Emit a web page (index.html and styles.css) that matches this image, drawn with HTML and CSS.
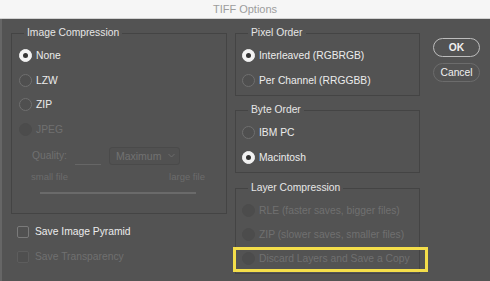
FILE: index.html
```html
<!DOCTYPE html>
<html>
<head>
<meta charset="utf-8">
<link rel="stylesheet" href="styles.css">
</head>
<body>
<div class="window">
  <div class="titlebar">TIFF Options</div>
  <div class="main">
    <div class="col-left">
      <fieldset class="group">
        <legend>Image Compression</legend>
        <div class="row"><span class="radio on"></span><span class="lbl">None</span></div>
        <div class="row"><span class="radio"></span><span class="lbl">LZW</span></div>
        <div class="row"><span class="radio"></span><span class="lbl">ZIP</span></div>
        <div class="row dis"><span class="radio"></span><span class="lbl">JPEG</span></div>
        <div class="quality">
          <span class="qlabel">Quality:</span>
          <span class="qinput"></span>
          <span class="select">Maximum<svg class="chev" width="7" height="5" viewBox="0 0 7 5"><path d="M0.5 1 L3.5 4 L6.5 1" fill="none" stroke="#6c6c6c" stroke-width="1"/></svg></span>
        </div>
        <div class="scale"><span>small file</span><span>large file</span></div>
        <div class="slider"></div>
      </fieldset>
      <div class="check-row"><span class="check"></span><span class="lbl">Save Image Pyramid</span></div>
      <div class="check-row dis"><span class="check"></span><span class="lbl">Save Transparency</span></div>
    </div>
    <div class="col-right">
      <fieldset class="group rgroup">
        <legend>Pixel Order</legend>
        <div class="row"><span class="radio on"></span><span class="lbl">Interleaved (RGBRGB)</span></div>
        <div class="row"><span class="radio"></span><span class="lbl">Per Channel (RRGGBB)</span></div>
      </fieldset>
      <fieldset class="group rgroup next">
        <legend>Byte Order</legend>
        <div class="row"><span class="radio"></span><span class="lbl">IBM PC</span></div>
        <div class="row"><span class="radio on"></span><span class="lbl">Macintosh</span></div>
      </fieldset>
      <fieldset class="group rgroup next layers">
        <legend>Layer Compression</legend>
        <div class="row dis"><span class="radio"></span><span class="lbl">RLE (faster saves, bigger files)</span></div>
        <div class="row dis"><span class="radio"></span><span class="lbl">ZIP (slower saves, smaller files)</span></div>
        <div class="row dis marked"><span class="radio"></span><span class="lbl">Discard Layers and Save a Copy</span><span class="highlight"></span></div>
      </fieldset>
    </div>
    <div class="col-buttons">
      <button class="btn primary">OK</button>
      <button class="btn">Cancel</button>
    </div>
  </div>
</div>
</body>
</html>
```

FILE: styles.css
```css
html, body {
  margin: 0;
  padding: 0;
}
body {
  width: 490px;
  height: 281px;
  overflow: hidden;
  background: #535353;
  font-family: "Liberation Sans", Arial, sans-serif;
  font-size: 10.3px;
  color: #ececec;
}
.window {
  width: 490px;
  height: 281px;
}
.titlebar {
  height: 18px;
  line-height: 18px;
  background: #f6f6f6;
  border-bottom: 1px solid #d2d2d2;
  text-align: center;
  font-size: 11px;
  color: #9d9d9d;
}
.main {
  display: flex;
  align-items: flex-start;
  height: 262px;
  box-sizing: border-box;
  border-left: 2px solid #666666;
  padding: 7px 0 0 9px;
}
.col-left {
  width: 216px;
  display: flex;
  flex-direction: column;
}
.col-right {
  width: 185px;
  margin-left: 8px;
  display: flex;
  flex-direction: column;
}
.col-buttons {
  width: 47px;
  margin-left: 13px;
  padding-top: 12px;
  display: flex;
  flex-direction: column;
  gap: 6px;
}
.group {
  margin: 0;
  min-width: 0;
  border: 1px solid #444444;
  padding: 3px 0 19px 7px;
}
.group legend {
  padding: 0 3px;
  margin-left: 5px;
  line-height: 14px;
  height: 14px;
  color: #e6e6e6;
}
.rgroup {
  padding: 3px 0 2px 6px;
}
.rgroup legend {
  margin-left: 6px;
}
.rgroup.next {
  margin-top: 7px;
}
.rgroup.layers {
  margin-top: 8px;
  padding-bottom: 3px;
}
.row {
  height: 24.7px;
  display: flex;
  align-items: center;
  gap: 4px;
  position: relative;
}
.rgroup .row {
  height: 25px;
}
.rgroup.layers .row {
  height: 24px;
}
.radio {
  width: 13px;
  height: 13px;
  box-sizing: border-box;
  border-radius: 50%;
  border: 1px solid #6f6f6f;
  background: #4f4f4f;
  flex: none;
  display: flex;
  align-items: center;
  justify-content: center;
}
.radio.on {
  background: #f2f2f2;
  border-color: #f2f2f2;
}
.radio.on::after {
  content: "";
  width: 5px;
  height: 5px;
  border-radius: 50%;
  background: #333333;
}
.row.dis .radio {
  border-color: #4c4c4c;
  background: #4c4c4c;
}
.row.dis .lbl,
.check-row.dis .lbl {
  color: #707070;
}
.quality {
  display: flex;
  align-items: center;
  height: 18px;
  margin: 5px 0 0 13px;
  color: #707070;
}
.qinput {
  width: 26px;
  height: 18px;
  box-sizing: border-box;
  border-bottom: 1px solid #666666;
  margin-left: 8px;
}
.select {
  width: 71px;
  height: 18px;
  box-sizing: border-box;
  margin-left: 8px;
  border: 1px solid #4a4a4a;
  border-radius: 3px;
  background: #515151;
  display: flex;
  align-items: center;
  justify-content: space-between;
  padding: 0 4px 0 6px;
  color: #727272;
  font-size: 10.5px;
}
.scale {
  display: flex;
  justify-content: space-between;
  width: 174px;
  margin: 6px 0 0 12px;
  line-height: 12px;
  font-size: 9.5px;
  color: #6c6c6c;
}
.slider {
  width: 156px;
  height: 2px;
  margin: 9px 0 0 21px;
  background: #6a6a6a;
}
.check-row {
  height: 24px;
  display: flex;
  align-items: center;
  gap: 6px;
  padding-left: 6px;
}
.check-row:first-of-type {
  margin-top: 6px;
}
.check-row:first-of-type + .check-row {
  margin-top: 1px;
}
.check {
  width: 12px;
  height: 12px;
  box-sizing: border-box;
  border: 1px solid #7a7a7a;
  border-radius: 2px;
  background: #515151;
  flex: none;
}
.check-row.dis .check {
  border-color: #5d5d5d;
  background: #4f4f4f;
}
.highlight {
  position: absolute;
  left: -9px;
  top: 1px;
  width: 195px;
  height: 25px;
  border: 3px solid #f4de4a;
  box-sizing: border-box;
  pointer-events: none;
}
.btn {
  width: 47px;
  height: 19px;
  box-sizing: border-box;
  border-radius: 10px;
  border: 1px solid #6c6c6c;
  background: #535353;
  color: #f0f0f0;
  font-family: "Liberation Sans", Arial, sans-serif;
  font-size: 10.3px;
  padding: 0;
  margin: 0;
}
.btn.primary {
  border-color: #bdbdbd;
  font-weight: bold;
}
```
